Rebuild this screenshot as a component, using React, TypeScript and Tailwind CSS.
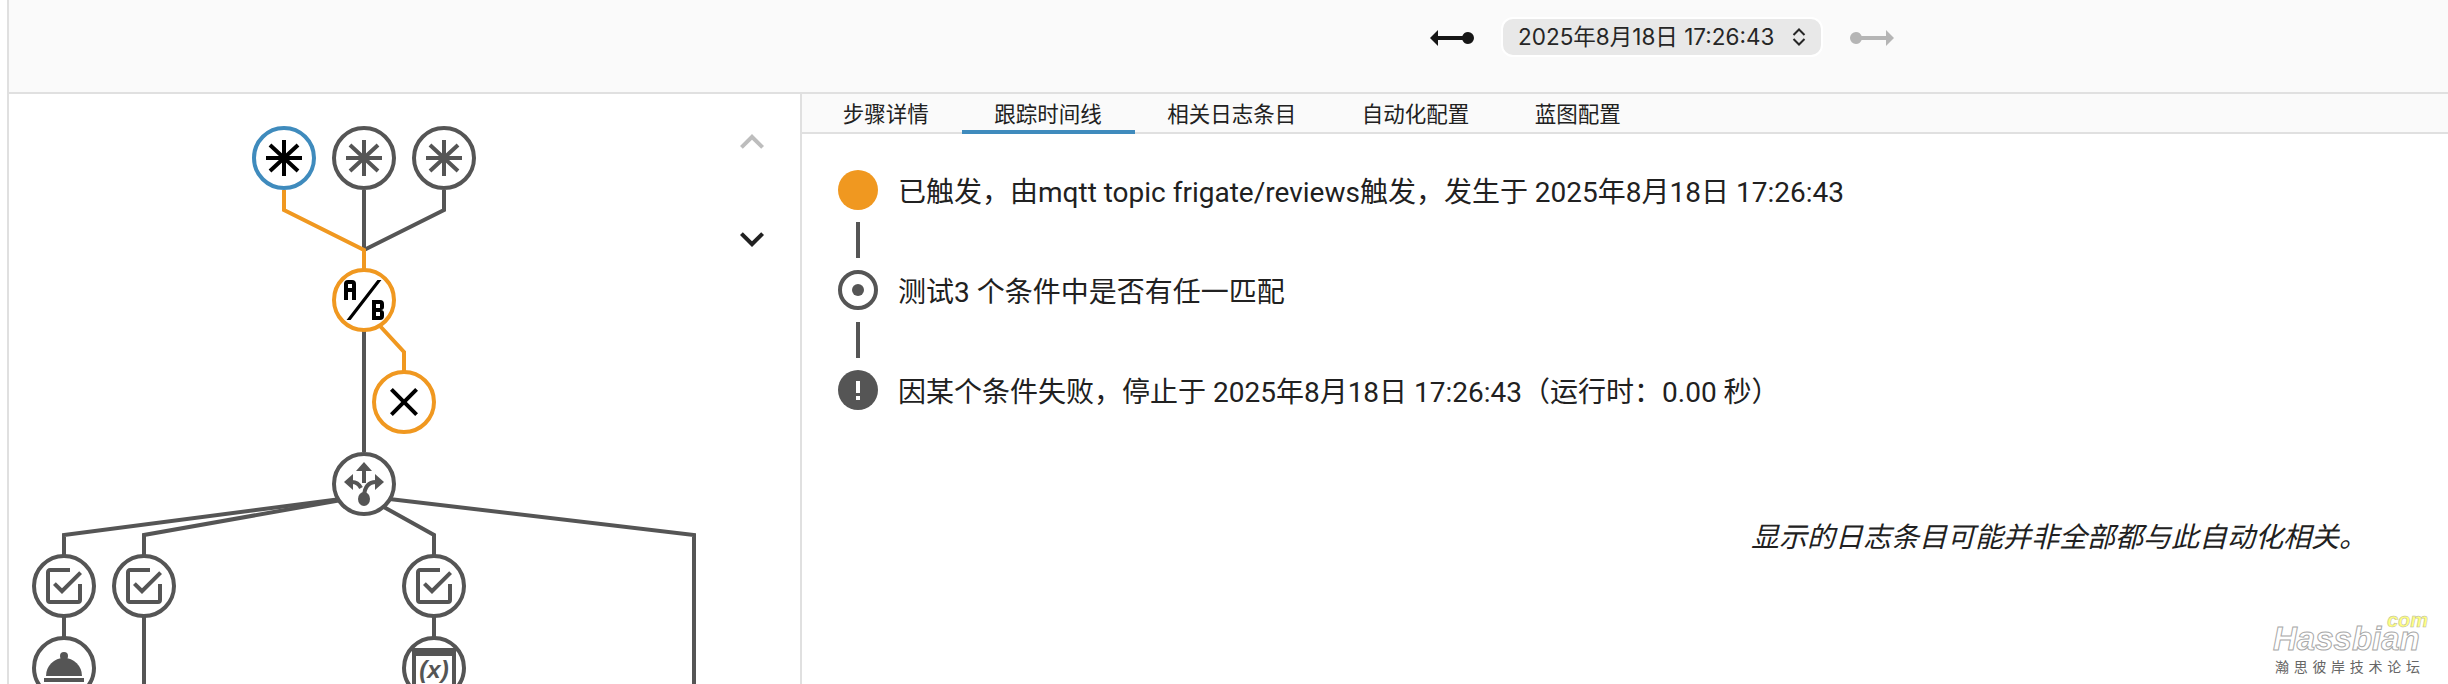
import React from "react";

const GRAY = "#555555";
const ORANGE = "#f09820";
const BLUE = "#3f8bbd";

const TABS = [
  { label: "步骤详情" },
  { label: "跟踪时间线", active: true },
  { label: "相关日志条目" },
  { label: "自动化配置" },
  { label: "蓝图配置" },
];

function Ray({ end, className }: { end?: boolean; className: string }) {
  return (
    <svg viewBox="0 0 24 24" className={`h-12 w-12 ${className}`} fill="currentColor">
      <path
        d={
          end
            ? "M1,12L5,16V13H17.17C17.58,14.17 18.69,15 20,15A3,3 0 0,0 23,12A3,3 0 0,0 20,9C18.69,9 17.58,9.83 17.17,11H5V8L1,12Z"
            : "M23,12L19,16V13H6.83C6.42,14.17 5.31,15 4,15A3,3 0 0,1 1,12A3,3 0 0,1 4,9C5.31,9 6.42,9.83 6.83,11H19V8L23,12Z"
        }
      />
    </svg>
  );
}

function Ring({ x, y, color = GRAY }: { x: number; y: number; color?: string }) {
  return <circle cx={x} cy={y} r={30} fill="#fff" stroke={color} strokeWidth={4} />;
}

function Star({ x, y, color }: { x: number; y: number; color: string }) {
  return (
    <path
      d={`M${x} ${y - 18}V${y + 18}M${x - 18} ${y}H${x + 18}M${x - 14} ${y - 13}L${x + 14} ${y + 13}M${x + 14} ${y - 13}L${x - 14} ${y + 13}`}
      stroke={color}
      strokeWidth={4}
      fill="none"
    />
  );
}

function Mdi({ x, y, d, color = GRAY }: { x: number; y: number; d: string; color?: string }) {
  return <path transform={`translate(${x - 24} ${y - 24}) scale(2)`} d={d} fill={color} />;
}

const CHECK =
  "M19,19H5V5H15V3H5C3.89,3 3,3.89 3,5V19A2,2 0 0,0 5,21H19A2,2 0 0,0 21,19V11H19M7.91,10.08L6.5,11.5L11,16L21,6L19.59,4.58L11,13.17L7.91,10.08Z";
const AB =
  "M4 2A2 2 0 0 0 2 4V12H4V8H6V12H8V4A2 2 0 0 0 6 2H4M4 4H6V6H4M22 15.5V14A2 2 0 0 0 20 12H16V22H20A2 2 0 0 0 22 20V18.5A1.54 1.54 0 0 0 20.5 17A1.54 1.54 0 0 0 22 15.5M20 20H18V18H20V20M20 16H18V14H20M5.3 22H3.28L18.7 2H20.72Z";
const CLOSE =
  "M19,6.41L17.59,5L12,10.59L6.41,5L5,6.41L10.59,12L5,17.59L6.41,19L12,13.41L17.59,19L19,17.59L13.41,12L19,6.41Z";

function TraceGraph() {
  return (
    <svg viewBox="9 94 719 590" className="h-[590px] w-[719px] shrink-0" fill="none">
      <g stroke={GRAY} strokeWidth={4} fill="none">
        <path d="M364 190V250" />
        <path d="M444 190V210L364 250" />
        <path d="M364 330V452" />
        <path d="M364 496L64 535V556" />
        <path d="M364 496L144 535V684" />
        <path d="M364 496L434 535V556" />
        <path d="M364 496L694 535V684" />
        <path d="M64 616V640" />
        <path d="M434 616V640" />
      </g>
      <g stroke={ORANGE} strokeWidth={4} fill="none">
        <path d="M284 190V210L364 250V270" />
        <path d="M380 326L404 352V372" />
      </g>

      <Ring x={284} y={158} color={BLUE} />
      <Star x={284} y={158} color="#000" />
      <Ring x={364} y={158} />
      <Star x={364} y={158} color={GRAY} />
      <Ring x={444} y={158} />
      <Star x={444} y={158} color={GRAY} />

      <Ring x={364} y={300} color={ORANGE} />
      <Mdi x={364} y={300} d={AB} color="#000" />
      <Ring x={404} y={402} color={ORANGE} />
      <Mdi x={404} y={402} d={CLOSE} color="#000" />

      <Ring x={364} y={484} />
      <g fill={GRAY}>
        <polygon points="364,462 372,471 366,471 366,483 362,483 362,471 356,471" />
        <polygon points="344,482 353,474 353,490" />
        <polygon points="384,482 375,474 375,490" />
        <ellipse cx={364} cy={499} rx={6} ry={7} />
      </g>
      <path d="M352 482Q358 482 361 488M376 482Q365 482 364 496" stroke={GRAY} strokeWidth={4} fill="none" />

      <Ring x={64} y={586} />
      <Mdi x={64} y={586} d={CHECK} />
      <Ring x={144} y={586} />
      <Mdi x={144} y={586} d={CHECK} />
      <Ring x={434} y={586} />
      <Mdi x={434} y={586} d={CHECK} />

      <Ring x={64} y={668} />
      <g fill={GRAY}>
        <path d="M46 676A18 18 0 0 1 82 676Z" />
        <circle cx={64} cy={656} r={4} />
        <rect x={44} y={678} width={40} height={4} />
      </g>

      <Ring x={434} y={668} />
      <path d="M412 654H456M414 654V684M454 654V684" stroke={GRAY} strokeWidth={4} fill="none" />
      <rect x={412} y={648} width={44} height={8} fill={GRAY} />
      <text
        x={434}
        y={678}
        textAnchor="middle"
        fontSize={24}
        fontStyle="italic"
        fontWeight={700}
        fontFamily="'Liberation Sans', sans-serif"
        fill={GRAY}
      >
        (x)
      </text>
    </svg>
  );
}

function Connector() {
  return (
    <div className="flex h-[60px] w-10 items-center justify-center">
      <div className="h-9 w-1 bg-[#555555]" />
    </div>
  );
}

function Row({ icon, text }: { icon: React.ReactNode; text: string }) {
  return (
    <div className="flex h-10 items-center gap-5 text-[28px] text-[#212121]">
      {icon}
      <span className="whitespace-nowrap pt-[6px]">{text}</span>
    </div>
  );
}

export default function App() {
  return (
    <div className="relative flex h-[684px] w-full flex-col overflow-hidden bg-white font-['Roboto','Noto_Sans_CJK_SC',sans-serif]">
      <div className="ml-[7px] flex h-[94px] shrink-0 items-start border-b-2 border-l-2 border-[#e0e0e0] bg-[#fafafa] pl-[1419px] pt-[14px]">
        <Ray end className="text-[#161616]" />
        <div className="ml-[25px] mt-[3px] flex h-[40px] w-[322px] items-center rounded-[12px] border-2 border-white bg-[#e8e8e8] pl-[15px] font-['Inter','Noto_Sans_CJK_SC',sans-serif] text-[22.5px] text-[#262626]">
          <span className="whitespace-nowrap">2025年8月18日 17:26:43</span>
          <svg viewBox="0 0 14 18" className="ml-[18px] h-[18px] w-[14px]" fill="none" stroke="#262626" strokeWidth={2}>
            <path d="M1.5 7L7 1.5L12.5 7M1.5 11L7 16.5L12.5 11" />
          </svg>
        </div>
        <Ray className="ml-[25px] text-[#b5b5b5]" />
      </div>

      <div className="flex min-h-0 flex-1">
        <div className="ml-[7px] flex w-[795px] shrink-0 border-x-2 border-[#e0e0e0]">
          <TraceGraph />
          <div className="flex flex-col gap-[49px] pt-6">
            <svg viewBox="0 0 24 24" className="h-12 w-12" fill="#bdbdbd">
              <path d="M7.41,15.41L12,10.83L16.59,15.41L18,14L12,8L6,14L7.41,15.41Z" />
            </svg>
            <svg viewBox="0 0 24 24" className="h-12 w-12" fill="#212121">
              <path d="M7.41,8.58L12,13.17L16.59,8.58L18,10L12,16L6,10L7.41,8.58Z" />
            </svg>
          </div>
        </div>

        <div className="flex min-w-0 flex-1 flex-col">
          <div className="flex h-10 shrink-0 items-stretch border-b-2 border-[#e0e0e0] bg-[#fafafa] pl-2">
            {TABS.map((t) => (
              <div
                key={t.label}
                className={`-mb-0.5 flex items-center border-b-4 px-[32.75px] pt-[5px] text-[21.5px] leading-none text-[#212121] ${
                  t.active ? "border-[#3f8bbd]" : "border-transparent"
                }`}
              >
                {t.label}
              </div>
            ))}
          </div>

          <div className="flex flex-col pl-9 pt-9">
            <Row
              text="已触发，由mqtt topic frigate/reviews触发，发生于 2025年8月18日 17:26:43"
              icon={<div className="h-10 w-10 shrink-0 rounded-full bg-[#f09820]" />}
            />
            <Connector />
            <Row
              text="测试3 个条件中是否有任一匹配"
              icon={
                <div className="flex h-10 w-10 shrink-0 items-center justify-center rounded-full border-4 border-[#555555]">
                  <div className="h-3 w-3 rounded-full bg-[#555555]" />
                </div>
              }
            />
            <Connector />
            <Row
              text="因某个条件失败，停止于 2025年8月18日 17:26:43（运行时：0.00 秒）"
              icon={
                <div className="flex h-10 w-10 shrink-0 flex-col items-center justify-center gap-[3px] rounded-full bg-[#555555]">
                  <div className="h-3 w-1 bg-white" />
                  <div className="h-1 w-1 bg-white" />
                </div>
              }
            />
          </div>

          <p className="mt-[108px] pr-[81px] text-right text-[28px] italic leading-10 text-[#212121]">
            显示的日志条目可能并非全部都与此自动化相关。
          </p>
        </div>
      </div>

      <div className="absolute left-[2273px] top-[612px] w-[160px] font-['Liberation_Sans',sans-serif] italic">
        <div className="absolute left-[114px] top-0 text-[20px] font-bold leading-4 text-[#ffff80] [-webkit-text-stroke:0.5px_#b8b8a0]">
          com
        </div>
        <div className="absolute left-0 top-4 text-[33px] font-bold leading-[22px] text-white [-webkit-text-stroke:1px_#a8a8a8]">
          Hassbian
        </div>
      </div>
      <div className="absolute left-[2275px] top-[656px] whitespace-nowrap font-['Noto_Sans_CJK_SC',sans-serif] text-[14px] leading-5 tracking-[4.7px] text-[#666666]">
        瀚思彼岸技术论坛
      </div>
    </div>
  );
}
